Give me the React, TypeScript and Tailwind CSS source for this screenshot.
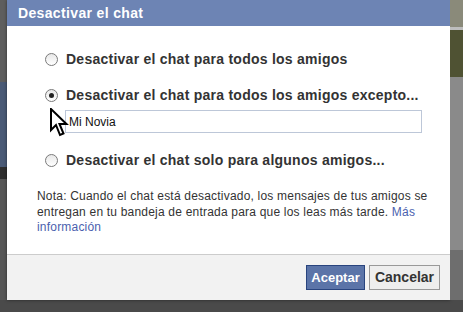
import React from "react";

function Radio({ checked }: { checked?: boolean }) {
  return (
    <span className="w-[13px] h-[13px] rounded-full border border-[#7a7a7a] bg-gradient-to-b from-[#e8e8e8] to-white flex items-center justify-center shrink-0">
      {checked && <span className="w-[5px] h-[5px] rounded-full bg-[#222]" />}
    </span>
  );
}

export default function App() {
  const font = { fontFamily: '"Liberation Sans", Arial, sans-serif' };
  return (
    <div className="w-[463px] h-[312px] relative overflow-hidden bg-[#5a5a5a]" style={font}>
      <div className="flex h-[300px]">
        <div className="w-[7px] flex flex-col">
          <div className="h-[82px] bg-[#5e5e5e]" />
          <div className="h-[85px] bg-[#4a5a76]" />
          <div className="h-[12px] bg-[#2e2e2e]" />
          <div className="flex-1 bg-[#565656]" />
        </div>
        <div className="w-[443px] flex flex-col bg-white shadow-[0_0_3px_rgba(0,0,0,0.5)]">
          <div className="h-[26px] bg-[#6d84b4] flex items-center pl-[11px] text-white font-bold text-[14px] tracking-[0.35px]">
            Desactivar el chat
          </div>
          <div className="flex-1 flex flex-col">
            <div className="pt-[25px] pl-[38px] pr-[20px] flex flex-col text-[#333]">
              <label className="h-[16px] flex items-center gap-[8px] text-[14px] font-bold tracking-[0.25px] whitespace-nowrap">
                <Radio />
                <span>Desactivar el chat para todos los amigos</span>
              </label>
              <label className="mt-[20px] h-[16px] flex items-center gap-[8px] text-[14px] font-bold tracking-[0.25px] whitespace-nowrap">
                <Radio checked />
                <span>Desactivar el chat para todos los amigos excepto...</span>
              </label>
              <div className="mt-[7px] ml-[20px] mr-[8px] h-[23px] border border-[#bdc7d8] flex items-center pl-[3px] text-[12px] text-[#111]">
                Mi Novia
              </div>
              <label className="mt-[19px] h-[16px] flex items-center gap-[8px] text-[14px] font-bold tracking-[0.25px] whitespace-nowrap">
                <Radio />
                <span>Desactivar el chat solo para algunos amigos...</span>
              </label>
            </div>
            <p className="mt-[21px] pl-[30px] pr-[12px] text-[12px] leading-[15.5px] tracking-[0.2px] text-[#333]">
              Nota: Cuando el chat está desactivado, los mensajes de tus amigos se entregan en tu bandeja de entrada para que los leas más tarde.{" "}
              <span className="text-[#4b5fae]">Más información</span>
            </p>
          </div>
          <div className="h-[46px] bg-[#f2f2f2] border-t border-[#cccccc] flex items-center justify-end gap-[4px] pr-[10px]">
            <button className="h-[25px] w-[59px] bg-[#5b74a8] border border-[#29447e] text-white font-bold text-[13px]">
              Aceptar
            </button>
            <button className="h-[25px] w-[71px] bg-[#eeeeee] border border-[#999999] text-[#333] font-bold text-[14px]">
              Cancelar
            </button>
          </div>
        </div>
        <div className="flex-1 flex flex-col">
          <div className="h-[27px] bg-[#8a8a7a]" />
          <div className="h-[3px] bg-[#bdbdbd]" />
          <div className="h-[47px] bg-[#4f5233]" />
          <div className="flex-1 bg-[#8a8a8a]" />
          <div className="h-[50px] bg-[#6e6e6e]" />
        </div>
      </div>
      <div className="h-[12px] bg-[#4a4a4a]" />
      <svg className="absolute left-[50px] top-[108px]" width="20" height="30" viewBox="0 0 20 30">
        <path d="M1 1 L1 22 L6 17 L10 27 L13.5 25.5 L9.5 16 L16.5 16 Z" fill="white" stroke="black" strokeWidth="2" strokeLinejoin="miter" />
      </svg>
    </div>
  );
}
